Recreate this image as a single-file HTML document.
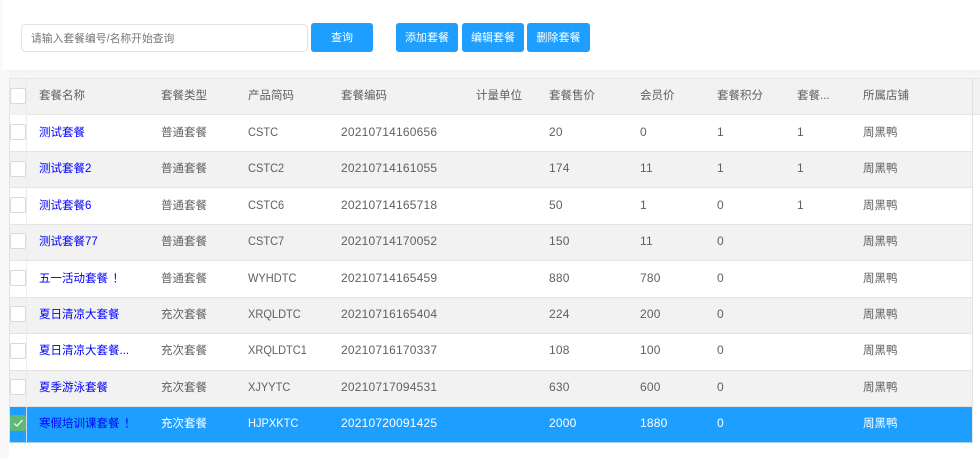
<!DOCTYPE html>
<html lang="zh">
<head>
<meta charset="utf-8">
<style>
html,body{margin:0;padding:0;background:#fff}
body{position:relative;width:980px;height:459px;overflow:hidden;font-family:"Liberation Sans","Noto Sans CJK SC",sans-serif;font-size:11.5px;color:#606060}
div{box-sizing:border-box}
.a{position:absolute}
.leftbg{left:0;top:70px;width:9px;height:389px;background:#f8f8f8}
.gap{left:0;top:70px;width:980px;height:9px;background:linear-gradient(#f1f1f1,#f8f8f8)}
.strip{left:0;top:0;width:3px;height:70px;background:#fafafa}
.input{left:21px;top:24px;width:287px;height:28px;border:1px solid #e2e2e2;border-radius:5px;background:#fff;line-height:28px;padding-left:9px;color:#777;font-size:10.8px;box-shadow:0 0 1px #eee}
.input span{filter:blur(.3px);display:inline-block}
.btn{top:23px;height:29px;background:#1e9fff;border-radius:3px;color:#fff;text-align:center;line-height:31px;font-size:11px}
.btn span{filter:blur(.25px);display:inline-block}
.row{left:9px;width:964px;border-left:1px solid #e2e2e2;border-right:1px solid #e2e2e2;border-bottom:1px solid #e4e4e4}
.odd{background:#fff}.even{background:#f2f2f2}
.sel{background:#1e9fff;color:#fff;border-bottom-color:#a8d4f4;border-right-color:#e8e8e8}
.head{left:9px;top:78px;width:971px;height:37px;background:#f2f2f2;border:1px solid #e6e6e6;border-right:0}
.vline{left:972px;top:79px;width:1px;height:36px;background:#e2e2e2}
.side{left:10px;width:16px;background:#f2f2f2}
.cell{position:absolute;top:0;height:100%;white-space:nowrap;line-height:37px;filter:blur(.3px)}
.h{line-height:35px}
.link{color:#0000ff}
.cb{left:10px;width:16px;height:16px;background:#fff;border:1px solid #d9d9d9;border-radius:2px}
.cbsel{background:#5fb878;border-color:#5fb878}
.sep{left:26px;width:1px;background:#ececec}
.n{font-size:12px;letter-spacing:.2px;line-height:35px}
.c{font-size:12px;line-height:35px;transform:scaleX(.92);transform-origin:0 50%}
.p{position:absolute;margin-left:4.5px}
</style>
</head>
<body>
<div class="a strip"></div>
<div class="a gap"></div>
<div class="a leftbg"></div>

<div class="a input"><span>请输入套餐编号/名称开始查询</span></div>
<div class="a btn" style="left:311px;width:62px"><span>查询</span></div>
<div class="a btn" style="left:396px;width:62px"><span>添加套餐</span></div>
<div class="a btn" style="left:462px;width:62px"><span>编辑套餐</span></div>
<div class="a btn" style="left:527px;width:63px"><span>删除套餐</span></div>

<!-- header -->
<div class="a head"></div>
<div class="a vline"></div>

<!-- rows -->
<div class="a row odd" style="top:115px;height:37px"></div>
<div class="a row even" style="top:152px;height:36px"></div>
<div class="a row odd" style="top:188px;height:37px"></div>
<div class="a row even" style="top:225px;height:36px"></div>
<div class="a row odd" style="top:261px;height:37px"></div>
<div class="a row even" style="top:298px;height:36px"></div>
<div class="a row odd" style="top:334px;height:37px"></div>
<div class="a row even" style="top:371px;height:36px"></div>
<div class="a row sel" style="top:407px;height:36px"></div>

<!-- fixed column -->
<div class="a side" style="top:79px;height:36px"></div>
<div class="a side" style="top:115px;height:36px;background:#fff"></div>
<div class="a side" style="top:152px;height:35px"></div>
<div class="a side" style="top:188px;height:36px;background:#fff"></div>
<div class="a side" style="top:225px;height:35px"></div>
<div class="a side" style="top:261px;height:36px;background:#fff"></div>
<div class="a side" style="top:298px;height:35px"></div>
<div class="a side" style="top:334px;height:36px;background:#fff"></div>
<div class="a side" style="top:371px;height:35px"></div>
<div class="a side" style="top:407px;height:35px;background:#1e9fff"></div>
<div class="a sep" style="top:79px;height:328px"></div>
<div class="a sep" style="top:407px;height:35px;background:#d4dde4"></div>

<div class="a cb" style="top:88px"></div>
<div class="a cb" style="top:124px"></div>
<div class="a cb" style="top:161px"></div>
<div class="a cb" style="top:197px"></div>
<div class="a cb" style="top:233px"></div>
<div class="a cb" style="top:270px"></div>
<div class="a cb" style="top:306px"></div>
<div class="a cb" style="top:343px"></div>
<div class="a cb" style="top:379px"></div>
<div class="a cb cbsel" style="top:415px">
<svg width="14" height="14" viewBox="0 0 14 14" style="display:block"><path d="M3 7.5 L6 10 L11.5 4" fill="none" stroke="#e8f5ec" stroke-width="1.3"/></svg>
</div>

<!-- header text -->
<div class="a" style="left:0;top:79px;width:980px;height:36px">
<span class="cell h" style="left:39px">套餐名称</span>
<span class="cell h" style="left:161px">套餐类型</span>
<span class="cell h" style="left:248px">产品简码</span>
<span class="cell h" style="left:341px">套餐编码</span>
<span class="cell h" style="left:476px">计量单位</span>
<span class="cell h" style="left:549px">套餐售价</span>
<span class="cell h" style="left:640px">会员价</span>
<span class="cell h" style="left:717px">套餐积分</span>
<span class="cell h" style="left:797px">套餐...</span>
<span class="cell h" style="left:863px">所属店铺</span>
</div>

<!-- row text -->
<div class="a" style="left:0;top:115px;width:980px;height:36px">
<span class="cell link" style="left:39px">测试套餐</span><span class="cell" style="left:161px">普通套餐</span><span class="cell c" style="left:248px">CSTC</span><span class="cell n" style="left:341px">20210714160656</span><span class="cell n" style="left:549px">20</span><span class="cell n" style="left:640px">0</span><span class="cell n" style="left:717px">1</span><span class="cell n" style="left:797px">1</span><span class="cell" style="left:863px">周黑鸭</span>
</div>
<div class="a" style="left:0;top:151px;width:980px;height:36px">
<span class="cell link" style="left:39px">测试套餐2</span><span class="cell" style="left:161px">普通套餐</span><span class="cell c" style="left:248px">CSTC2</span><span class="cell n" style="left:341px">20210714161055</span><span class="cell n" style="left:549px">174</span><span class="cell n" style="left:640px">11</span><span class="cell n" style="left:717px">1</span><span class="cell n" style="left:797px">1</span><span class="cell" style="left:863px">周黑鸭</span>
</div>
<div class="a" style="left:0;top:188px;width:980px;height:36px">
<span class="cell link" style="left:39px">测试套餐6</span><span class="cell" style="left:161px">普通套餐</span><span class="cell c" style="left:248px">CSTC6</span><span class="cell n" style="left:341px">20210714165718</span><span class="cell n" style="left:549px">50</span><span class="cell n" style="left:640px">1</span><span class="cell n" style="left:717px">0</span><span class="cell n" style="left:797px">1</span><span class="cell" style="left:863px">周黑鸭</span>
</div>
<div class="a" style="left:0;top:224px;width:980px;height:36px">
<span class="cell link" style="left:39px">测试套餐77</span><span class="cell" style="left:161px">普通套餐</span><span class="cell c" style="left:248px">CSTC7</span><span class="cell n" style="left:341px">20210714170052</span><span class="cell n" style="left:549px">150</span><span class="cell n" style="left:640px">11</span><span class="cell n" style="left:717px">0</span><span class="cell" style="left:863px">周黑鸭</span>
</div>
<div class="a" style="left:0;top:261px;width:980px;height:36px">
<span class="cell link" style="left:39px">五一活动套餐<span class="p">！</span></span><span class="cell" style="left:161px">普通套餐</span><span class="cell c" style="left:248px">WYHDTC</span><span class="cell n" style="left:341px">20210714165459</span><span class="cell n" style="left:549px">880</span><span class="cell n" style="left:640px">780</span><span class="cell n" style="left:717px">0</span><span class="cell" style="left:863px">周黑鸭</span>
</div>
<div class="a" style="left:0;top:297px;width:980px;height:36px">
<span class="cell link" style="left:39px">夏日清凉大套餐</span><span class="cell" style="left:161px">充次套餐</span><span class="cell c" style="left:248px">XRQLDTC</span><span class="cell n" style="left:341px">20210716165404</span><span class="cell n" style="left:549px">224</span><span class="cell n" style="left:640px">200</span><span class="cell n" style="left:717px">0</span><span class="cell" style="left:863px">周黑鸭</span>
</div>
<div class="a" style="left:0;top:333px;width:980px;height:36px">
<span class="cell link" style="left:39px">夏日清凉大套餐...</span><span class="cell" style="left:161px">充次套餐</span><span class="cell c" style="left:248px">XRQLDTC1</span><span class="cell n" style="left:341px">20210716170337</span><span class="cell n" style="left:549px">108</span><span class="cell n" style="left:640px">100</span><span class="cell n" style="left:717px">0</span><span class="cell" style="left:863px">周黑鸭</span>
</div>
<div class="a" style="left:0;top:370px;width:980px;height:36px">
<span class="cell link" style="left:39px">夏季游泳套餐</span><span class="cell" style="left:161px">充次套餐</span><span class="cell c" style="left:248px">XJYYTC</span><span class="cell n" style="left:341px">20210717094531</span><span class="cell n" style="left:549px">630</span><span class="cell n" style="left:640px">600</span><span class="cell n" style="left:717px">0</span><span class="cell" style="left:863px">周黑鸭</span>
</div>
<div class="a" style="left:0;top:406px;width:980px;height:36px;color:#fff">
<span class="cell link" style="left:39px">寒假培训课套餐<span class="p">！</span></span><span class="cell" style="left:161px">充次套餐</span><span class="cell c" style="left:248px">HJPXKTC</span><span class="cell n" style="left:341px">20210720091425</span><span class="cell n" style="left:549px">2000</span><span class="cell n" style="left:640px">1880</span><span class="cell n" style="left:717px">0</span><span class="cell" style="left:863px">周黑鸭</span>
</div>
</body>
</html>
